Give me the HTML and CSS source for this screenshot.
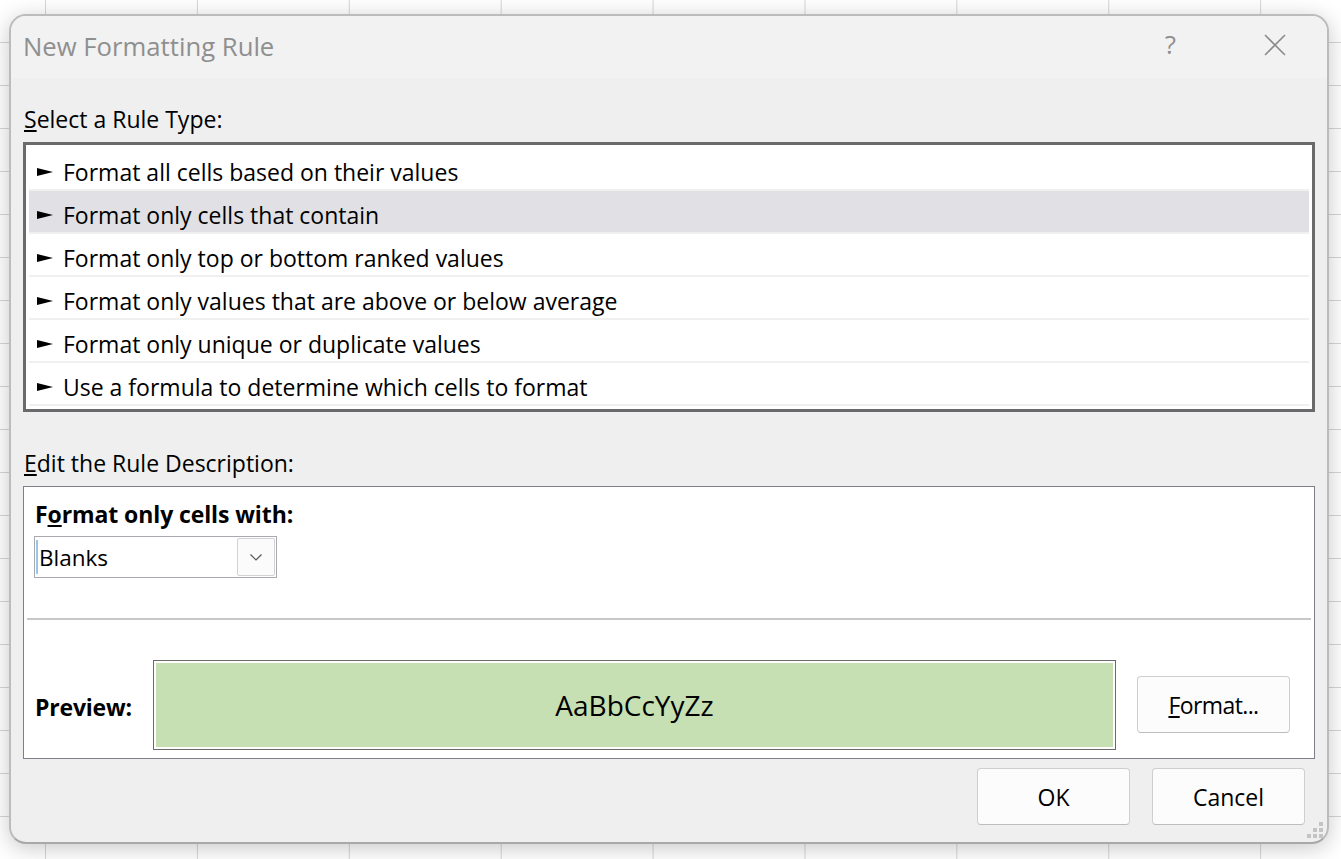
FILE: index.html
```html
<!DOCTYPE html>
<html lang="en">
<head>
<meta charset="utf-8">
<title>New Formatting Rule</title>
<link rel="stylesheet" href="styles.css">
</head>
<body>
<div class="sheet">
  <div class="dialog">
    <header class="titlebar">
      <span class="title">New Formatting Rule</span>
      <span class="help">?</span>
      <svg class="close" width="22" height="22" viewBox="0 0 22 22"><path d="M1 1 L21 21 M21 1 L1 21" stroke="#8c8c8c" stroke-width="1.6" fill="none"/></svg>
    </header>
    <main class="content">
      <div class="label type-label"><u>S</u>elect a Rule Type:</div>
      <ul class="rules">
        <li class="rule"><span class="tri"></span>Format all cells based on their values</li>
        <li class="rule selected"><span class="tri"></span>Format only cells that contain</li>
        <li class="rule"><span class="tri"></span>Format only top or bottom ranked values</li>
        <li class="rule"><span class="tri"></span>Format only values that are above or below average</li>
        <li class="rule"><span class="tri"></span>Format only unique or duplicate values</li>
        <li class="rule"><span class="tri"></span>Use a formula to determine which cells to format</li>
      </ul>
      <div class="label edit-label"><u>E</u>dit the Rule Description:</div>
      <section class="desc">
        <div class="with">F<u>o</u>rmat only cells with:</div>
        <div class="combo">
          <span class="caret"></span><span class="combo-text">Blanks</span>
          <span class="combo-btn"><svg width="14" height="9" viewBox="0 0 14 9"><path d="M1.5 1.5 L7 7 L12.5 1.5" stroke="#555" stroke-width="1.2" fill="none"/></svg></span>
        </div>
        <hr class="sep">
        <div class="preview-row">
          <span class="preview-label">Preview:</span>
          <div class="preview"><div class="swatch">AaBbCcYyZz</div></div>
          <button class="btn format-btn"><u>F</u>ormat...</button>
        </div>
      </section>
      <footer class="actions">
        <button class="btn">OK</button>
        <button class="btn">Cancel</button>
      </footer>
    </main>
    <svg class="grip" width="17" height="17" viewBox="0 0 17 17"><path fill="#c4c4c4" d="M12 0h4v4h-4zM6 6h4v4H6zM12 6h4v4h-4zM0 12h4v4H0zM6 12h4v4H6zM12 12h4v4h-4z"/></svg>
  </div>
</div>
</body>
</html>
```

FILE: styles.css
```css
* { box-sizing: border-box; }
html, body { margin: 0; height: 100%; }
body {
  overflow: hidden;
  font-family: "Open Sans", "Noto Sans", sans-serif;
  color: #000;
  background: #fff;
}
.sheet {
  width: 1341px;
  height: 859px;
  padding: 14px 0 0 9px;
  background-color: #fff;
  background-image:
    linear-gradient(#d6d6d6 1px, transparent 1px),
    linear-gradient(90deg, #d6d6d6 1px, transparent 1px);
  background-size: 100% 43px, 151.9px 100%;
  background-position: 0 42px, 45px 0;
}
.dialog {
  position: relative;
  width: 1320px;
  height: 830px;
  border: 2px solid #bcbcbc;
  border-bottom-color: #a8a8a8;
  border-radius: 17px;
  background: #efefef;
  box-shadow: 0 4px 22px rgba(0, 0, 0, .22);
  overflow: hidden;
}
.titlebar {
  display: flex;
  align-items: center;
  height: 62px;
  padding: 0 41px 4px 12px;
  background: #f2f2f2;
}
.title { flex: 1; margin-top: 2px; font-size: 25.7px; color: #8f8f8f; }
.help { font-size: 26px; color: #8f8f8f; margin: 0 88px 2px 0; }
.content { padding: 0 12px; }
.label { font-size: 23px; line-height: 30px; }
.type-label { margin-top: 26px; padding-left: 1px; }
.rules {
  list-style: none;
  margin: 8px 0 0;
  padding: 7px 3px 3px;
  height: 270px;
  border: 3px solid #6a6a6c;
  background: #fff;
}
.rule {
  display: flex;
  align-items: center;
  height: 43px;
  padding: 6px 0 0 8px;
  font-size: 23px;
  border-bottom: 2px solid #f0f0f0;
}
.rule:first-child { height: 39px; padding-top: 2px; }
.selected { background: #e0e0e5; }
.tri {
  width: 0;
  height: 0;
  margin-right: 10px;
  border-left: 16px solid #000;
  border-top: 4.5px solid transparent;
  border-bottom: 4.5px solid transparent;
}
.edit-label { margin-top: 36px; padding-left: 1px; }
.desc {
  position: relative;
  margin-top: 8px;
  height: 273px;
  padding: 0 3px;
  border: 1px solid #7d8088;
  background: #fff;
}
.with { font-size: 23px; font-weight: 700; line-height: 30px; margin: 12px 0 0 8px; letter-spacing: -.1px; }
.combo {
  display: flex;
  align-items: center;
  width: 243px;
  height: 42px;
  margin: 7px 0 0 7px;
  padding: 2px 1px 2px 1px;
  border: 1px solid #a9a9b0;
}
.caret { width: 2px; height: 34px; background: #9cc6e8; }
.combo-text { flex: 1; padding-left: 1px; font-size: 22.5px; }
.combo-btn {
  display: flex;
  align-items: center;
  justify-content: center;
  width: 38px;
  height: 38px;
  border: 1px solid #d2d2d2;
  border-radius: 2px;
  background: #fbfbfb;
}
.sep { height: 2px; margin: 40px 0 0; border: 0; background: #c8c8c8; }
.preview-row { display: flex; align-items: flex-start; margin-top: 40px; }
.preview-label { width: 118px; font-size: 23px; font-weight: 700; letter-spacing: -.2px; margin: 32px 0 0 8px; line-height: 30px; }
.preview { width: 963px; height: 90px; padding: 2px; border: 1px solid #6a6a6a; }
.swatch {
  display: flex;
  align-items: center;
  justify-content: center;
  height: 100%;
  background: #c7e0b3;
  font-size: 28px;
}
.btn {
  width: 153px;
  height: 57px;
  padding: 0;
  border: 1px solid #cfcfcf;
  border-bottom-color: #bdbdbd;
  border-radius: 4px;
  background: #fcfcfc;
  font: 23px "Open Sans", "Noto Sans", sans-serif;
  color: #000;
}
.format-btn { margin: 16px 0 0 21px; letter-spacing: -.6px; }
.actions { display: flex; justify-content: flex-end; gap: 22px; margin: 9px 10px 0 0; }
.grip { position: absolute; right: 3px; bottom: 3px; }
```
